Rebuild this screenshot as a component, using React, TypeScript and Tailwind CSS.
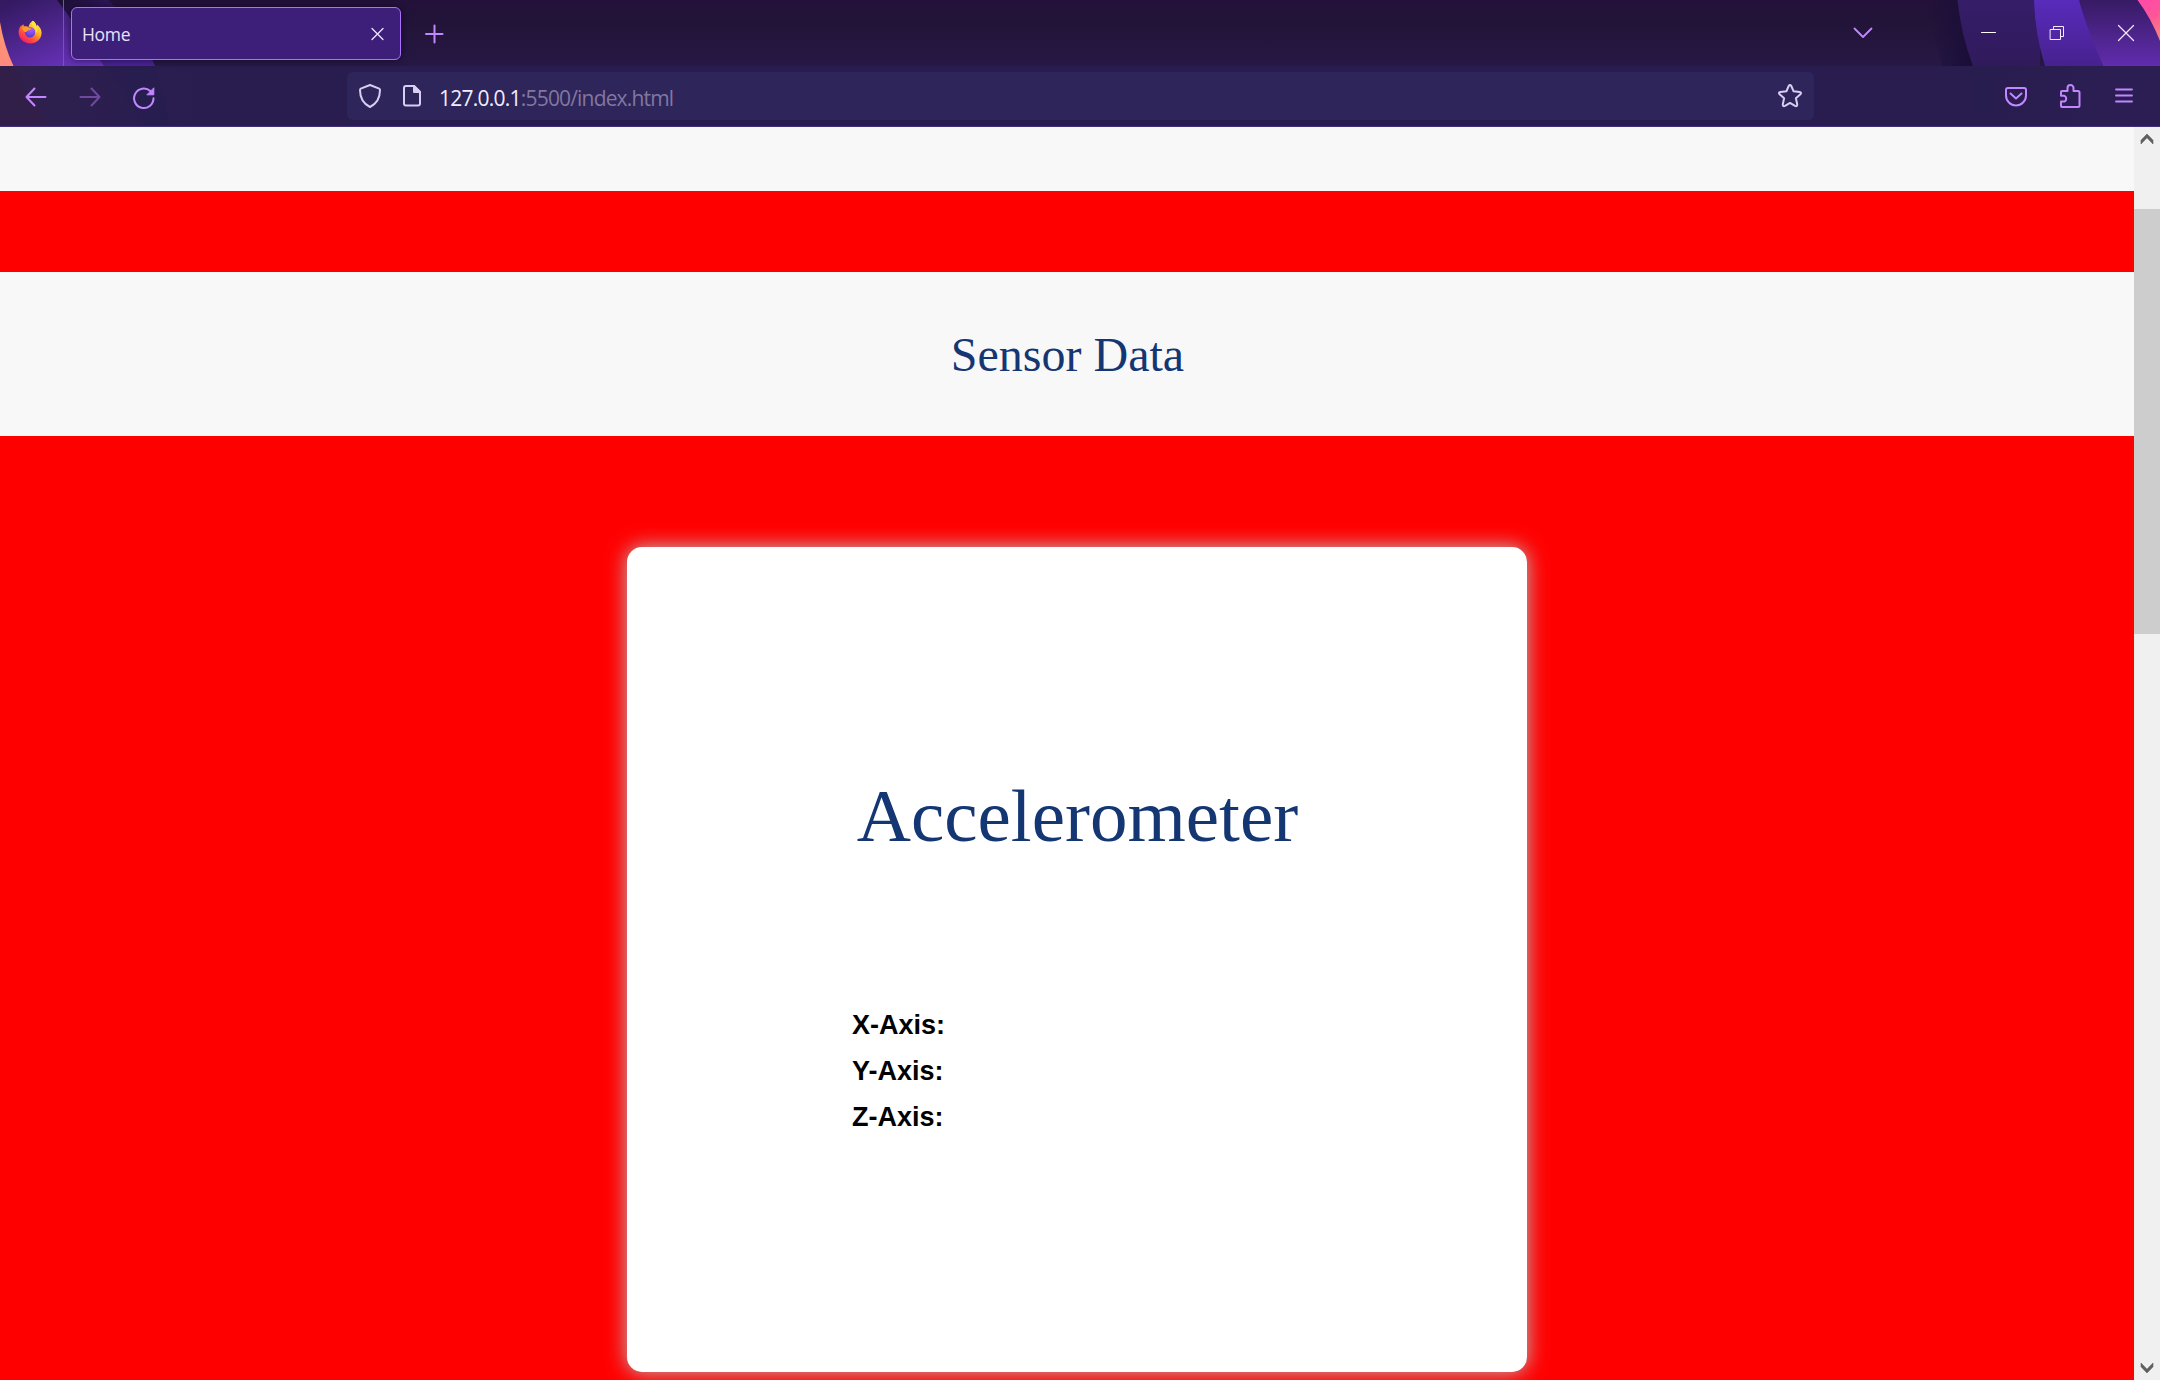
import React from "react";

function ThemeArtwork() {
  return (
    <svg className="absolute inset-0" width="2160" height="127" viewBox="0 0 2160 127" aria-hidden="true">
      <defs>
        <linearGradient id="base" x1="0" y1="0" x2="0" y2="66" gradientUnits="userSpaceOnUse">
          <stop offset="0" stopColor="#24113a" />
          <stop offset="0.3" stopColor="#221338" />
          <stop offset="1" stopColor="#261844" />
        </linearGradient>
        <linearGradient id="leftBand" x1="20" y1="0" x2="60" y2="100" gradientUnits="userSpaceOnUse">
          <stop offset="0" stopColor="#351a63" />
          <stop offset="0.7" stopColor="#6430b4" />
          <stop offset="1" stopColor="#6a30b8" />
        </linearGradient>
        <linearGradient id="leftBand2" x1="60" y1="0" x2="110" y2="66" gradientUnits="userSpaceOnUse">
          <stop offset="0" stopColor="#1c0f33" />
          <stop offset="1" stopColor="#4a2295" />
        </linearGradient>
        <linearGradient id="coral" x1="0" y1="20" x2="0" y2="66" gradientUnits="userSpaceOnUse">
          <stop offset="0" stopColor="#ff9a6a" />
          <stop offset="1" stopColor="#ff8a80" />
        </linearGradient>
        <linearGradient id="shade" x1="1925" y1="0" x2="1972" y2="0" gradientUnits="userSpaceOnUse">
          <stop offset="0" stopColor="#1c0f38" stopOpacity="0" />
          <stop offset="1" stopColor="#190e38" />
        </linearGradient>
        <linearGradient id="band1" x1="0" y1="0" x2="0" y2="66" gradientUnits="userSpaceOnUse">
          <stop offset="0" stopColor="#361d69" />
          <stop offset="1" stopColor="#301a5b" />
        </linearGradient>
        <linearGradient id="band2" x1="0" y1="0" x2="0" y2="66" gradientUnits="userSpaceOnUse">
          <stop offset="0" stopColor="#592bbb" />
          <stop offset="1" stopColor="#47218e" />
        </linearGradient>
        <linearGradient id="band3" x1="0" y1="0" x2="0" y2="66" gradientUnits="userSpaceOnUse">
          <stop offset="0" stopColor="#371b64" />
          <stop offset="1" stopColor="#612cae" />
        </linearGradient>
        <linearGradient id="pink" x1="2140" y1="0" x2="2160" y2="34" gradientUnits="userSpaceOnUse">
          <stop offset="0" stopColor="#ff4aa8" />
          <stop offset="0.5" stopColor="#ff5599" />
          <stop offset="1" stopColor="#ff7d80" />
        </linearGradient>
        <linearGradient id="bar" x1="0" y1="0" x2="2160" y2="0" gradientUnits="userSpaceOnUse">
          <stop offset="0" stopColor="#30204c" />
          <stop offset="0.06" stopColor="#2a1e50" />
          <stop offset="0.1" stopColor="#281d4e" />
          <stop offset="0.9" stopColor="#281d4e" />
          <stop offset="1" stopColor="#2c1e54" />
        </linearGradient>
      </defs>
      <rect width="2160" height="66" fill="url(#base)" />
      <path d="M50 0H108Q140 30 155 66H90Z" fill="url(#leftBand2)" />
      <path d="M0 0H57Q82 34 104 66H0Z" fill="url(#leftBand)" />
      <path d="M0 22Q4 46 13.500 66H0Z" fill="url(#coral)" />
      <path d="M1925 0H1958Q1962 34 1973 66H1942Z" fill="url(#shade)" />
      <path d="M1957.500 0H2040V66H1973Q1961 34 1957.500 0Z" fill="url(#band1)" />
      <path d="M2034 0H2090L2110 66H2045Q2035 34 2034 0Z" fill="url(#band2)" />
      <path d="M2079 0H2160V66H2103.500Q2085 24 2079 0Z" fill="url(#band3)" />
      <path d="M2137.500 0H2160V41Q2151 18 2137.500 0Z" fill="url(#pink)" />
      <rect y="66" width="2160" height="61" fill="url(#bar)" />
      <path d="M0 66H14Q28 98 52 127H0Z" fill="#332048" opacity="0.6" />
      <path d="M104 66H155Q162 96 170 127H145Q126 94 104 66Z" fill="#241c4c" opacity="0.35" />
      <rect y="126" width="2160" height="1" fill="#40307a" />
    </svg>
  );
}

function FirefoxLogo() {
  return (
    <svg width="24" height="24" viewBox="0 0 24 24" aria-hidden="true">
      <defs>
        <linearGradient id="fox" x1="20" y1="2" x2="5" y2="22" gradientUnits="userSpaceOnUse">
          <stop offset="0" stopColor="#fff44f" />
          <stop offset="0.35" stopColor="#ffb42a" />
          <stop offset="0.65" stopColor="#ff5a36" />
          <stop offset="1" stopColor="#f5156c" />
        </linearGradient>
        <radialGradient id="globe" cx="0.6" cy="0.2" r="0.9">
          <stop offset="0" stopColor="#b45cf0" />
          <stop offset="0.5" stopColor="#7a4bea" />
          <stop offset="1" stopColor="#4a33b8" />
        </radialGradient>
      </defs>
      <path d="M14.800 0.800C17.500 2.400 18.300 5 18.700 6.600C19.300 6.400 19 5 19 4.500C22 7 23.700 10 23.600 13C23.400 19 18.500 23.500 12.200 23.500C5.500 23.500 0.600 18.500 0.600 12.300C0.600 9.500 1.700 7.200 3.300 5.200L3.500 6.500C4 5.600 4.600 4.900 5.300 4.300L6 6.400C7.600 6 9.200 6.300 10.500 7C11.200 4.500 12.500 2 14.800 0.800Z" fill="url(#fox)" />
      <circle cx="12" cy="12.300" r="5.200" fill="url(#globe)" />
      <path d="M4 8.300C6 6.400 9 6.300 11 7.900L13.200 8.400C12.800 9.700 11.200 10 10.100 10.300C9.400 11.400 8.500 11.600 7.200 12.300C6 11.600 4.600 10 4 8.300Z" fill="#ff9d22" />
      <path d="M14.800 0.800C12.900 3.800 14.300 5.900 16.500 8C18.200 10 18 12 17.400 13.500C19.500 12 20 9 18.700 6.600C18.300 4.200 16.800 1.900 14.800 0.800Z" fill="#ffe23e" />
    </svg>
  );
}

type GlyphProps = { w: number; h: number; color: string; sw?: number; className?: string; children: React.ReactNode };

function Glyph({ w, h, color, sw = 2, className, children }: GlyphProps) {
  return (
    <svg
      width={w}
      height={h}
      viewBox={`0 0 ${w} ${h}`}
      fill="none"
      stroke={color}
      strokeWidth={sw}
      strokeLinecap="round"
      strokeLinejoin="round"
      className={className}
      aria-hidden="true"
    >
      {children}
    </svg>
  );
}

const LILAC = "#c287ff";
const PALE = "#dacdf2";

function TabStrip() {
  return (
    <div className="flex h-[66px]">
      <div className="flex h-[66px] w-[64px] shrink-0 border-r border-[#7a52b5] pt-[20px] pl-[18px]">
        <FirefoxLogo />
      </div>
      <div className="mt-[7px] ml-[7px] flex h-[53px] w-[330px] shrink-0 items-center justify-between rounded-[6px] border border-[#ac70ff] bg-[#3d1f7a] pr-[15px] pl-[10px] shadow-[0_0_6px_rgba(10,5,30,0.7)]">
        <span className="font-['Open_Sans',sans-serif] text-[17.5px] leading-[24px] tracking-[-0.3px] text-[#e9e2fa]">Home</span>
        <Glyph w={14} h={14} color="#ece3ff" sw={1.3}>
          <path d="M1 1.500L12 12.500M12 1.500L1 12.500" />
        </Glyph>
      </div>
      <Glyph w={20} h={20} color={LILAC} className="mt-[24px] ml-[23px]">
        <path d="M2 10H18.500M10.500 1.500V18.500" />
      </Glyph>
      <div className="grow" />
      <Glyph w={20} h={12} color={LILAC} sw={1.8} className="mt-[27px] mr-[108px]">
        <path d="M1.500 1.500L10 10L18.500 1.500" />
      </Glyph>
      <Glyph w={16} h={16} color="#ffffff" sw={1} className="mt-[24px] mr-[52px]">
        <path d="M0.500 8.500H14.500" />
      </Glyph>
      <Glyph w={16} h={16} color="#f4eaff" sw={1} className="mt-[25px] mr-[52px]">
        <path d="M1.500 4.500H11.500V14.500H1.500ZM4.500 4.500V1.500H14.500V11.500H11.500" strokeLinejoin="miter" />
      </Glyph>
      <Glyph w={18} h={18} color="#f4eaff" sw={1.2} className="mt-[24px] mr-[25px]">
        <path d="M1.500 1.500L16.500 16.500M16.500 1.500L1.500 16.500" />
      </Glyph>
    </div>
  );
}

function Toolbar() {
  return (
    <div className="flex h-[61px]">
      <Glyph w={24} h={20} color={LILAC} className="mt-[21px] ml-[24px]">
        <path d="M10.500 1.500L2.500 10L10.500 18.500M2.500 10H21.500" />
      </Glyph>
      <Glyph w={24} h={20} color="#6f4a9c" className="mt-[21px] ml-[30px]">
        <path d="M13.500 1.500L21.500 10L13.500 18.500M21.500 10H2.500" />
      </Glyph>
      <Glyph w={24} h={24} color={LILAC} className="mt-[20px] ml-[30px]">
        <path d="M18.300 5.100A9.700 9.700 0 1 0 21.500 12.300" />
        <path d="M21.800 2.200V8.800H15.200Z" fill={LILAC} strokeWidth={1} />
      </Glyph>
      <div className="mt-[6px] ml-[191px] flex h-[48px] w-[1467px] shrink-0 rounded-[6px] bg-[#2e255b]">
        <Glyph w={24} h={26} color={PALE} className="mt-[11px] ml-[11px]">
          <path d="M12 2L21.200 5.600Q22 6 22 7C22 15.500 18 21 12 24C6 21 2 15.500 2 7Q2 6 2.800 5.600Z" />
        </Glyph>
        <Glyph w={20} h={24} color={PALE} className="mt-[12px] ml-[20px]">
          <path d="M12 2H4Q2 2 2 4V19.500Q2 21.500 4 21.500H16Q18 21.500 18 19.500V8Z" />
          <path d="M12 2V8H18Z" fill={PALE} />
        </Glyph>
        <div className="mt-[11px] ml-[17px] font-['Open_Sans',sans-serif] text-[21px] leading-[30px] tracking-[-0.83px] whitespace-nowrap text-[#82779f]">
          <span className="tracking-[-0.75px] text-[#f3edff]">127.0.0.1</span>:5500/index.html
        </div>
        <div className="grow" />
        <Glyph w={26} h={26} color={PALE} className="mt-[11px] mr-[11px]">
          <path d="M11.700 3Q13 1 14.300 3L16.600 8.300L22.600 9Q24.900 9.500 23.400 11.300L18.900 15.200L20.200 21.200Q20.300 23.800 18 22.900L13 19.900L8 22.900Q5.700 23.800 5.800 21.200L7.100 15.200L2.600 11.300Q1.100 9.500 3.400 9L9.400 8.300Z" />
        </Glyph>
      </div>
      <Glyph w={24} h={22} color={LILAC} className="mt-[20px] ml-[190px]">
        <path d="M4 2H20Q22 2 22 4V9.500A10 10 0 0 1 2 9.500V4Q2 2 4 2Z" />
        <path d="M6.500 7.500L12 12.500L17.500 7.500" />
      </Glyph>
      <Glyph w={24} h={26} color={LILAC} className="mt-[17px] ml-[30px]">
        <path d="M4 24Q3 24 3 23V18.500H6.500A3.200 3.200 0 0 0 6.500 12.800H3V9Q3 8 4 8H9.500V5A3 3 0 0 1 15.500 5V8H20Q21.500 8 21.500 9.500V22.500Q21.500 24 20 24Z" />
      </Glyph>
      <Glyph w={20} h={18} color={LILAC} sw={1.8} className="mt-[20px] ml-[32px]">
        <path d="M2 3.500H18M2 9.500H18M2 15.500H18" />
      </Glyph>
    </div>
  );
}

function Scrollbar() {
  return (
    <div className="flex w-[26px] shrink-0 flex-col bg-[#f0f0f0]">
      <svg width="26" height="82" viewBox="0 0 26 82" aria-hidden="true">
        <path d="M7 17L13 10.800L19 17V13.200L13 7L7 13.200Z" fill="#606060" stroke="#606060" strokeWidth="0.6" />
      </svg>
      <div className="h-[425px] bg-[#cdcdcd]" />
      <div className="grow" />
      <svg width="26" height="26" viewBox="0 0 26 26" aria-hidden="true">
        <path d="M7 9L13 15.200L19 9V12.800L13 19L7 12.800Z" fill="#606060" stroke="#606060" strokeWidth="0.6" />
      </svg>
    </div>
  );
}

export default function App() {
  return (
    <div className="flex h-[1380px] w-[2160px] flex-col overflow-hidden">
      <header className="relative h-[127px] shrink-0">
        <ThemeArtwork />
        <div className="relative">
          <TabStrip />
          <Toolbar />
        </div>
      </header>
      <div className="flex min-h-0 grow">
        <main className="flex grow flex-col bg-[#ff0000]">
          <div className="h-[64px] shrink-0 bg-[#f8f8f8]" />
          <div className="mt-[81px] flex h-[164px] shrink-0 items-center justify-center bg-[#f8f8f8]">
            <h1 className="pt-[2px] pl-[1px] font-['Liberation_Serif',serif] text-[48px] leading-[56px] text-[#143774]">Sensor Data</h1>
          </div>
          <section className="mt-[111px] ml-[627px] h-[825px] w-[900px] shrink-0 rounded-[15px] bg-white shadow-[0_0_20px_#bbbbbb]">
            <h2 className="pt-[226px] pl-[1px] text-center font-['Liberation_Serif',serif] text-[75px] leading-[86px] text-[#143774]">Accelerometer</h2>
            <div className="mt-[143px] ml-[225px] font-['Liberation_Sans',sans-serif] text-[27px] leading-[46px] font-bold text-black">
              <p>X-Axis:</p>
              <p>Y-Axis:</p>
              <p>Z-Axis:</p>
            </div>
          </section>
        </main>
        <Scrollbar />
      </div>
    </div>
  );
}
